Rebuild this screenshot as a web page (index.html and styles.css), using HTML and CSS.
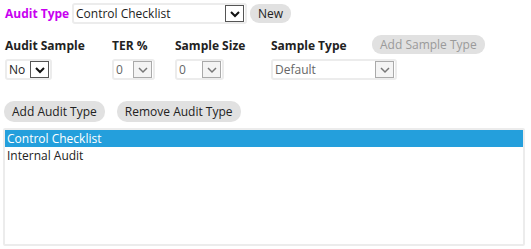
FILE: index.html
```html
<!DOCTYPE html>
<html>

<head>
    <link rel="stylesheet" href="styles.css">
    <title>Audit Types</title>
</head>

<body>
    <div id="page">
        <div class="toprow">
            <span class="typelabel">Audit Type</span>
            <div class="sel" id="typesel">
                <span class="seltext">Control Checklist</span>
                <span class="arrow dark"><svg width="12" height="8" viewBox="0 0 12 8"><path d="M2 2 L6 6 L10 2" fill="none" stroke="#111" stroke-width="2"/></svg></span>
            </div>
            <span class="btn" id="newbtn">New</span>
        </div>

        <div class="grid">
            <div class="lbl">Audit Sample</div>
            <div class="lbl">TER %</div>
            <div class="lbl">Sample Size</div>
            <div class="lbl">Sample Type</div>
            <div><span class="btn off" id="addsample">Add Sample Type</span></div>

            <div>
                <div class="sel" id="samplesel">
                    <span class="seltext">No</span>
                    <span class="arrow dark"><svg width="12" height="8" viewBox="0 0 12 8"><path d="M2 2 L6 6 L10 2" fill="none" stroke="#111" stroke-width="2"/></svg></span>
                </div>
            </div>
            <div>
                <div class="sel dis" id="tersel">
                    <span class="seltext">0</span>
                    <span class="arrow"><svg width="12" height="8" viewBox="0 0 12 8"><path d="M2 2 L6 6 L10 2" fill="none" stroke="#777" stroke-width="1.5"/></svg></span>
                </div>
            </div>
            <div>
                <div class="sel dis" id="sizesel">
                    <span class="seltext">0</span>
                    <span class="arrow"><svg width="12" height="8" viewBox="0 0 12 8"><path d="M2 2 L6 6 L10 2" fill="none" stroke="#777" stroke-width="1.5"/></svg></span>
                </div>
            </div>
            <div>
                <div class="sel dis" id="typesel2">
                    <span class="seltext">Default</span>
                    <span class="arrow"><svg width="12" height="8" viewBox="0 0 12 8"><path d="M2 2 L6 6 L10 2" fill="none" stroke="#777" stroke-width="1.5"/></svg></span>
                </div>
            </div>
            <div></div>
        </div>

        <div class="btnrow">
            <span class="btn" id="addtype">Add Audit Type</span>
            <span class="btn" id="removetype">Remove Audit Type</span>
        </div>

        <div id="list">
            <div class="item picked">Control Checklist</div>
            <div class="item">Internal Audit</div>
        </div>
    </div>
</body>

</html>
```

FILE: styles.css
```css
body {
    margin: 0;
    font-family: "Open Sans", "Noto Sans", sans-serif;
    font-size: 12px;
    color: #222;
    background-color: white;
}

#page {
    padding: 3px 4px 0 4px;
}

.toprow {
    display: flex;
    align-items: center;
    height: 21px;
}

.typelabel {
    font-weight: bold;
    color: #c800f0;
    width: 67px;
    padding-left: 1px;
}

.sel {
    display: flex;
    align-items: center;
    justify-content: space-between;
    background-color: white;
    border: 2px solid #ececec;
    border-radius: 3px;
    height: 17px;
    padding-left: 2px;
    padding-right: 1px;
}

.seltext {
    white-space: nowrap;
}

.dis .seltext {
    color: #666;
}

.arrow {
    display: flex;
    align-items: center;
    justify-content: center;
    width: 19px;
    height: 17px;
    border: 1px solid #aaa;
    background-color: #f4f4f4;
    box-sizing: border-box;
}

.arrow.dark {
    border-color: #555;
    background-color: white;
}

#typesel {
    width: 168px;
}

.btn {
    display: inline-block;
    background-color: #e1e1e1;
    border-radius: 9px;
    height: 19px;
    line-height: 19px;
    padding: 0 8px;
    white-space: nowrap;
}

.btn.off {
    color: #9a9a9a;
}

#newbtn {
    margin-left: 3px;
}

.grid {
    display: grid;
    grid-template-columns: 107px 63px 96px 101px auto;
    margin-top: 12px;
    padding-left: 1px;
    row-gap: 5px;
    align-items: center;
}

.lbl {
    font-weight: bold;
}

#addsample {
    margin-top: -2px;
}

#samplesel {
    width: 40px;
}

#tersel {
    width: 36px;
}

#sizesel {
    width: 42px;
}

#typesel2 {
    width: 119px;
}

.btnrow {
    display: flex;
    gap: 12px;
    margin-top: 21px;
}

.btnrow .btn {
    height: 21px;
    line-height: 21px;
    border-radius: 10px;
}

#list {
    margin-top: 6px;
    margin-left: -1px;
    height: 114px;
    border: 2px solid #ececec;
    border-radius: 2px;
    margin-right: 2px;
}

.item {
    height: 17px;
    line-height: 17px;
    padding-left: 2px;
}

.item.picked {
    background-color: #249fdc;
    color: white;
}
```
